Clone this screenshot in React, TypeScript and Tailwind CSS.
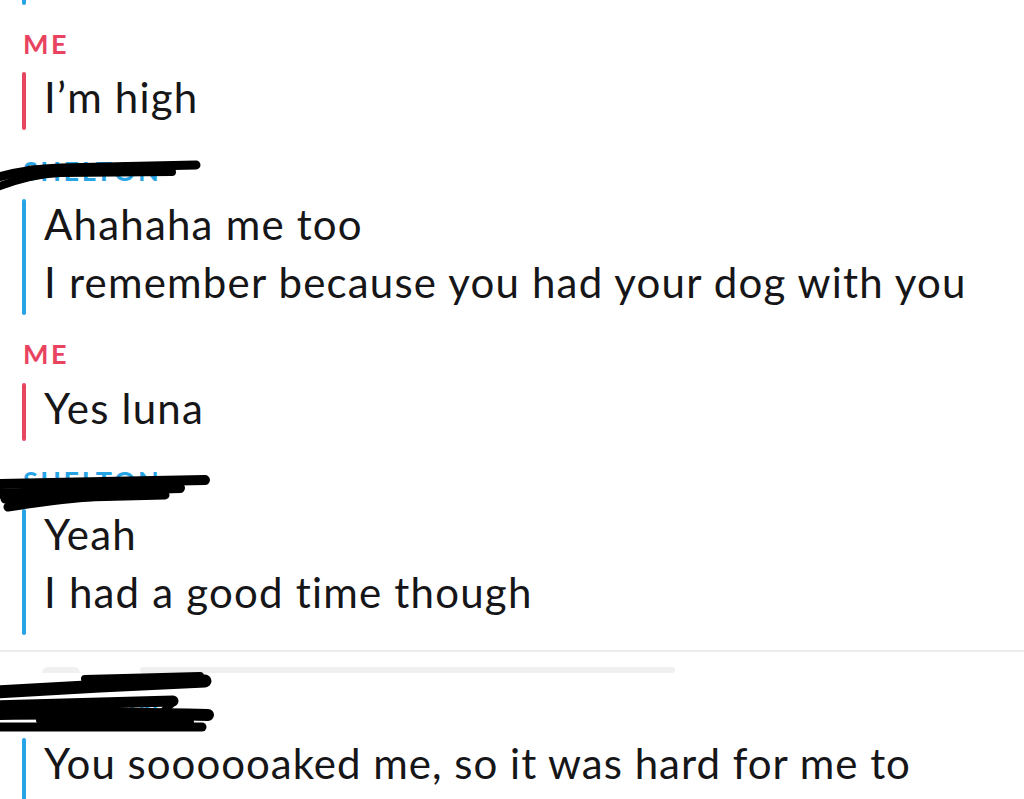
import React from "react";

const RED = "bg-[#e8445f]";
const BLUE = "bg-[#27a4e6]";

function Label({ text, color }: { text: string; color: "red" | "blue" }) {
  return (
    <div
      className={
        "h-[20px] leading-[20px] text-[27px] font-bold tracking-[2.5px] ml-[23px] " +
        (color === "red" ? "text-[#e8445f]" : "text-[#27a4e6]")
      }
    >
      {text}
    </div>
  );
}

function Block({
  lines,
  color,
  extra,
  tight,
}: {
  lines: string[];
  color: "red" | "blue";
  extra?: boolean;
  tight?: boolean;
}) {
  return (
    <div className="flex ml-[22px]">
      <div
        className={
          "w-[4px] shrink-0 rounded-full " + (color === "red" ? RED : BLUE)
        }
      />
      <div
        className={
          "pl-[18px] -mt-1 text-[42px] leading-[58px] [font-variant-ligatures:none] text-[#161618] whitespace-nowrap " +
          (tight ? "tracking-[1px] " : "tracking-[1.2px] ") +
          (extra ? "mb-[14px]" : "mb-1")
        }
      >
        {lines.map((l, i) => (
          <div key={i}>{l}</div>
        ))}
      </div>
    </div>
  );
}

export default function App() {
  return (
    <div
      className="relative w-[1024px] h-[799px] overflow-hidden bg-white"
      style={{ fontFamily: "Lato, 'Noto Sans', sans-serif" }}
    >
      <div className={"ml-[22px] w-[4px] h-[5px] rounded-b-full " + BLUE} />

      <div className="mt-[29px]">
        <Label text="ME" color="red" />
      </div>
      <div className="mt-[18px]">
        <Block lines={["I\u2019m high"]} color="red" />
      </div>

      <div className="mt-[31px]">
        <Label text="SHELTON" color="blue" />
      </div>
      <div className="mt-[18px]">
        <Block
          lines={[
            "Ahahaha me too",
            "I remember because you had your dog with you",
          ]}
          color="blue"
        />
      </div>

      <div className="mt-[29px]">
        <Label text="ME" color="red" />
      </div>
      <div className="mt-[19px]">
        <Block lines={["Yes luna"]} color="red" />
      </div>

      <div className="mt-[30px]">
        <Label text="SHELTON" color="blue" />
      </div>
      <div className="mt-[18px]">
        <Block
          lines={["Yeah", "I had a good time though"]}
          color="blue"
          extra
        />
      </div>

      <div className="mt-[15px] h-[2px] bg-[#ededed]" />

      <div className="mt-[15px] flex items-start h-[7px]">
        <div className="ml-[42px] w-[38px] h-[6px] rounded-t-full bg-[#f0f0f0]" />
        <div className="ml-[60px] w-[535px] h-[6px] rounded-full bg-[#f0f0f0]" />
      </div>

      <div className="mt-[25px]">
        <Label text="SHELTON" color="blue" />
      </div>
      <div className="mt-[19px]">
        <Block
          lines={["You soooooaked me, so it was hard for me to"]}
          color="blue"
          extra
          tight
        />
      </div>

      <svg
        className="absolute inset-0 pointer-events-none"
        width="1024"
        height="799"
        viewBox="0 0 1024 799"
        fill="none"
        stroke="#000"
        strokeLinecap="round"
        strokeLinejoin="round"
      >
        {/* scribble 1 */}
        <path d="M196 165 L60 168 C35 169 15 172 -5 178" strokeWidth="9" />
        <path d="M172 172 L60 173 C35 174 15 180 -5 188" strokeWidth="8" />
        <path d="M150 168 L30 170" strokeWidth="9" />
        {/* scribble 2 */}
        <path d="M-5 484 L205 480" strokeWidth="10" />
        <path d="M-5 494 L180 488" strokeWidth="10" />
        <path d="M5 499 L165 495" strokeWidth="9" />
        <path d="M8 507 C40 502 70 498 100 496" strokeWidth="9" />
        {/* scribble 3 */}
        <path d="M-5 692 C60 688 140 684 205 681" strokeWidth="13" />
        <path d="M85 679 L200 676" strokeWidth="8" />
        <path d="M-5 706 L173 701" strokeWidth="11" />
        <path d="M-5 714 C60 713 150 714 208 715" strokeWidth="12" />
        <path d="M-5 727 L202 727" strokeWidth="9" />
        <path d="M173 702 L157 718" strokeWidth="8" />
        <path d="M40 720 L190 722" strokeWidth="8" />
      </svg>
    </div>
  );
}
